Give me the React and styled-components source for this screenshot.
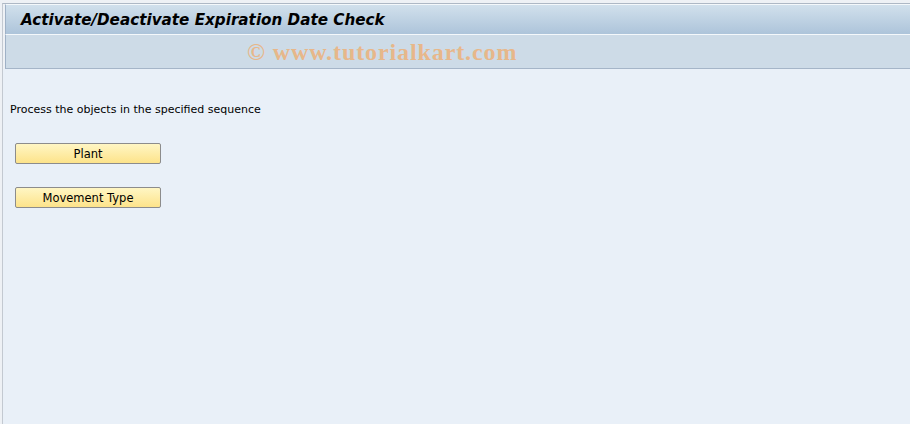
import React from 'react';
import styled, { createGlobalStyle } from 'styled-components';

const Global = createGlobalStyle`
  html, body {
    margin: 0;
    padding: 0;
    background: #eef1f5;
  }
  #root {
    height: 424px;
  }
`;

const Frame = styled.div`
  box-sizing: border-box;
  height: 424px;
  padding-top: 3px;
  padding-left: 2px;
  display: flex;
  flex-direction: column;
`;

const Window = styled.div`
  flex: 1;
  display: flex;
  flex-direction: column;
  border-top: 1px solid #aeb8c5;
  border-left: 1px solid #c3c9d1;
`;

const TitleBar = styled.div`
  height: 31px;
  margin-left: 2px;
  box-sizing: border-box;
  border-top: 1px solid #f4f8fb;
  border-left: 1px solid #9fb1c6;
  border-bottom: 1px solid #f4f8fb;
  background: linear-gradient(#d1e0ec, #adc4da);
  display: flex;
  align-items: center;
  padding-left: 15px;
`;

const Title = styled.h1`
  margin: 0;
  font-family: "DejaVu Sans", Verdana, sans-serif;
  font-size: 15.2px;
  font-weight: bold;
  font-style: italic;
  color: #000;
`;

const Toolbar = styled.div`
  height: 34px;
  margin-left: 2px;
  box-sizing: border-box;
  background: #cddbe7;
  border-left: 1px solid #9fb1c6;
  border-bottom: 1px solid #a5b5c8;
  display: flex;
  align-items: center;
  padding-left: 241px;
`;

const Watermark = styled.span`
  font-family: "Liberation Serif", "Times New Roman", serif;
  font-weight: bold;
  font-size: 24px;
  letter-spacing: 0.9px;
  color: #e7b78a;
  padding-top: 2px;
`;

const Content = styled.div`
  flex: 1;
  background: #e9f0f8;
  padding: 34px 0 0 7px;
  display: flex;
  flex-direction: column;
  align-items: flex-start;
`;

const Hint = styled.p`
  margin: 0 0 27px 0;
  font-family: "DejaVu Sans", Tahoma, sans-serif;
  font-size: 11px;
  color: #000;
`;

const Buttons = styled.div`
  display: flex;
  flex-direction: column;
  gap: 23px;
  padding-left: 5px;
`;

const Button = styled.button`
  width: 146px;
  height: 21px;
  box-sizing: border-box;
  border: 1px solid #8c8c8c;
  border-radius: 2px;
  background: linear-gradient(#fff6c4, #fde38a);
  font-family: "DejaVu Sans", Tahoma, sans-serif;
  font-size: 11.5px;
  color: #000;
  padding: 0;
  cursor: pointer;
`;

const steps = ['Plant', 'Movement Type'];

export default function App() {
  return (
    <>
      <Global />
      <Frame>
        <Window>
          <TitleBar>
            <Title>Activate/Deactivate Expiration Date Check</Title>
          </TitleBar>
          <Toolbar>
            <Watermark>© www.tutorialkart.com</Watermark>
          </Toolbar>
          <Content>
            <Hint>Process the objects in the specified sequence</Hint>
            <Buttons>
              {steps.map((s) => (
                <Button key={s}>{s}</Button>
              ))}
            </Buttons>
          </Content>
        </Window>
      </Frame>
    </>
  );
}
